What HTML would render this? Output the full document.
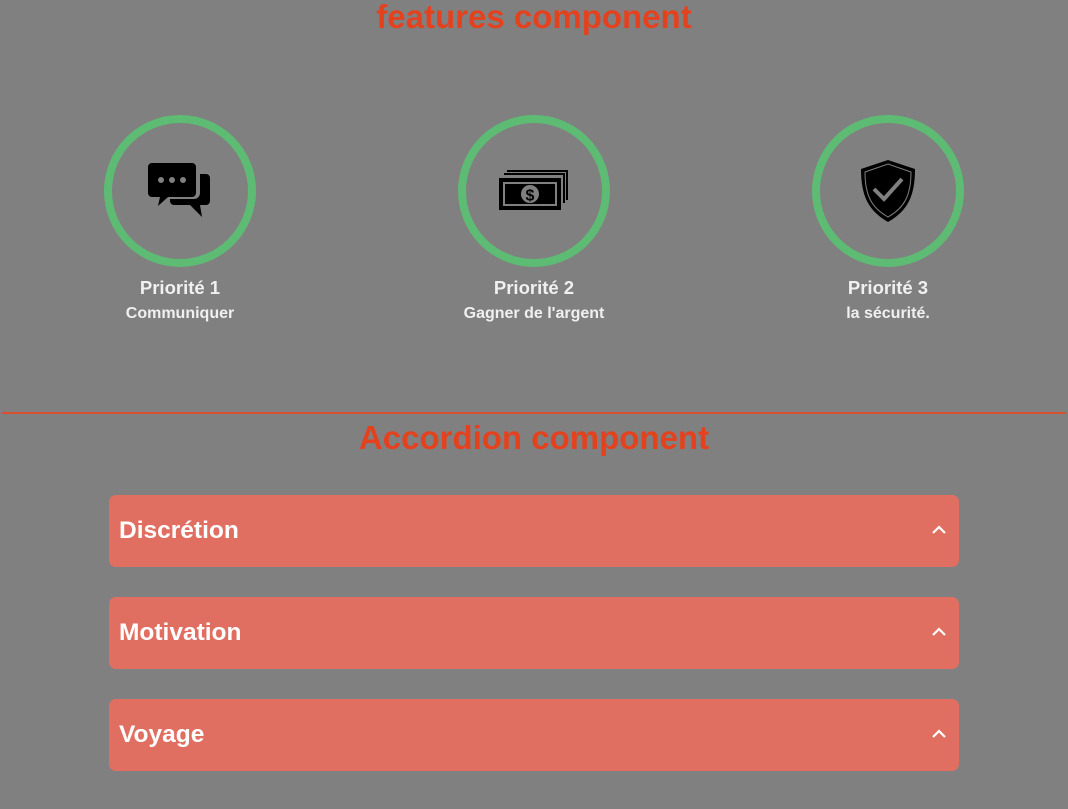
<!DOCTYPE html>
<html><head><meta charset="utf-8"><style>
*{margin:0;padding:0;box-sizing:border-box}
body{width:1068px;height:809px;background:#808080;font-family:"Liberation Sans",sans-serif;position:relative;overflow:hidden}
h1{position:absolute;left:0;width:1068px;text-align:center;color:#e4421f;font-size:33px;font-weight:bold}
.f{position:absolute;top:115px;width:200px;text-align:center;color:#f0f0f0}
.ring{width:152px;height:152px;border:8px solid #5dbb74;border-radius:50%;margin:0 auto;display:flex;align-items:center;justify-content:center}
.t{font-weight:bold;font-size:18.5px;margin-top:10px}
.s{font-weight:bold;font-size:16px;margin-top:6px}
.line{position:absolute;left:2px;right:2px;top:412px;height:2px;background:#d9502f}
.acc{position:absolute;left:109px;width:850px;height:72px;background:#e06f62;border-radius:7px;color:#fff;font-weight:bold;font-size:24.5px;padding-left:10px;line-height:72px}
.acc svg{position:absolute;right:13px;top:30px}
</style></head><body>
<h1 style="top:-2px">features component</h1>
<div class="f" style="left:80px"><div class="ring">
<svg width="64" height="56" viewBox="0 0 64 56"><path d="M4 0h40a4 4 0 0 1 4 4v26a4 4 0 0 1-4 4H20L10 43l2-9H4a4 4 0 0 1-4-4V4a4 4 0 0 1 4-4z"/><path d="M52 11h6a4 4 0 0 1 4 4v23a4 4 0 0 1-4 4h-6l2 12-12-12H26a4 4 0 0 1-4-4v-2h24a6 6 0 0 0 6-6z"/><circle cx="13" cy="17" r="3" fill="#808080"/><circle cx="24" cy="17" r="3" fill="#808080"/><circle cx="35" cy="17" r="3" fill="#808080"/></svg>
</div><div class="t">Priorité 1</div><div class="s">Communiquer</div></div>
<div class="f" style="left:434px"><div class="ring">
<svg width="70" height="42" viewBox="0 0 70 42"><path d="M8 1h60v29" fill="none" stroke="#000" stroke-width="2"/><path d="M5 4h60v29" fill="none" stroke="#000" stroke-width="2"/><rect x="0" y="8" width="62" height="32" fill="#000"/><rect x="4" y="12" width="54" height="24" fill="#808080"/><rect x="6" y="14" width="50" height="20" fill="#000"/><circle cx="31" cy="24" r="9" fill="#808080"/><text x="31" y="30.5" text-anchor="middle" font-size="16" font-weight="bold" font-family="Liberation Sans">$</text></svg>
</div><div class="t">Priorité 2</div><div class="s">Gagner de l'argent</div></div>
<div class="f" style="left:788px"><div class="ring">
<svg width="58" height="64" viewBox="0 0 58 64"><path d="M29 1 L56 10 C56 38 48 52 29 63 C10 52 2 38 2 10 Z" fill="#000"/><path d="M29 5 L52 13 C52 37 45 49 29 58 C13 49 6 37 6 13 Z" fill="#000" stroke="#808080" stroke-width="1"/><path d="M15 30 L25 40 L43 20" fill="none" stroke="#808080" stroke-width="4"/></svg>
</div><div class="t">Priorité 3</div><div class="s">la sécurité.</div></div>
<div class="line"></div>
<h1 style="top:419px">Accordion component</h1>
<div class="acc" style="top:495px">Discrétion<svg width="14" height="10" viewBox="0 0 14 10"><path d="M1 8 7 2l6 6" fill="none" stroke="#fff" stroke-width="2.2"/></svg></div>
<div class="acc" style="top:597px">Motivation<svg width="14" height="10" viewBox="0 0 14 10"><path d="M1 8 7 2l6 6" fill="none" stroke="#fff" stroke-width="2.2"/></svg></div>
<div class="acc" style="top:699px">Voyage<svg width="14" height="10" viewBox="0 0 14 10"><path d="M1 8 7 2l6 6" fill="none" stroke="#fff" stroke-width="2.2"/></svg></div>
</body></html>
